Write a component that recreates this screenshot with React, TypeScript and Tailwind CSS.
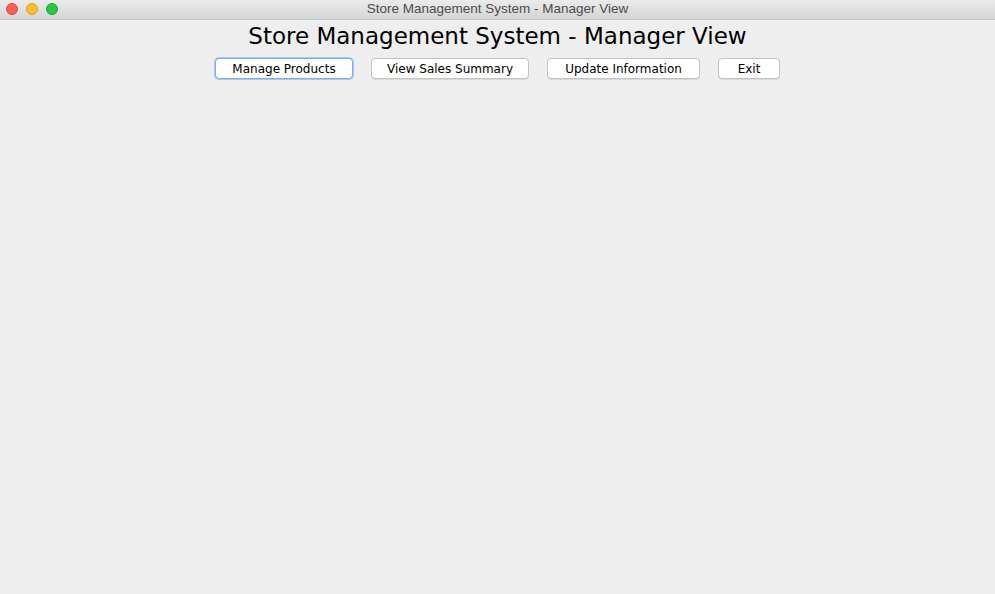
const buttons = [
  { label: "Manage Products", width: "w-[138px]", focused: true },
  { label: "View Sales Summary", width: "w-[158px]", focused: false },
  { label: "Update Information", width: "w-[153px]", focused: false },
  { label: "Exit", width: "w-[62px]", focused: false },
];

function TitleBar() {
  return (
    <div className="relative flex h-[20px] items-center justify-center border-b border-[#c4c4c4] bg-gradient-to-b from-[#ebebeb] to-[#d5d5d5]">
      <div className="absolute left-[6px] top-[3px] flex gap-[8px]">
        <span className="h-[12px] w-[12px] rounded-full border border-[#e2463f] bg-[#fe5f57]" />
        <span className="h-[12px] w-[12px] rounded-full border border-[#e1a116] bg-[#febc2e]" />
        <span className="h-[12px] w-[12px] rounded-full border border-[#12ac28] bg-[#28c840]" />
      </div>
      <span className="font-['Liberation_Sans',sans-serif] text-[13.5px] text-[#4d4d4d]">
        Store Management System - Manager View
      </span>
    </div>
  );
}

export default function App() {
  return (
    <div className="flex h-[594px] w-[995px] flex-col bg-[#eeeeee] font-['DejaVu_Sans',sans-serif]">
      <TitleBar />
      <h1 className="mt-[1px] text-center text-[23px] leading-[30px] text-black">
        Store Management System - Manager View
      </h1>
      <div className="mt-[7px] flex justify-center gap-[18px]">
        {buttons.map((b) => (
          <button
            key={b.label}
            className={`${b.width} h-[21px] rounded-[4px] border bg-white text-[12px] leading-none text-black ${
              b.focused
                ? "border-[#7eaaf0] shadow-[0_0_0_1px_#a9c8f7]"
                : "border-[#c3c3c3] shadow-[0_1px_0_#d9d9d9]"
            }`}
          >
            {b.label}
          </button>
        ))}
      </div>
    </div>
  );
}
